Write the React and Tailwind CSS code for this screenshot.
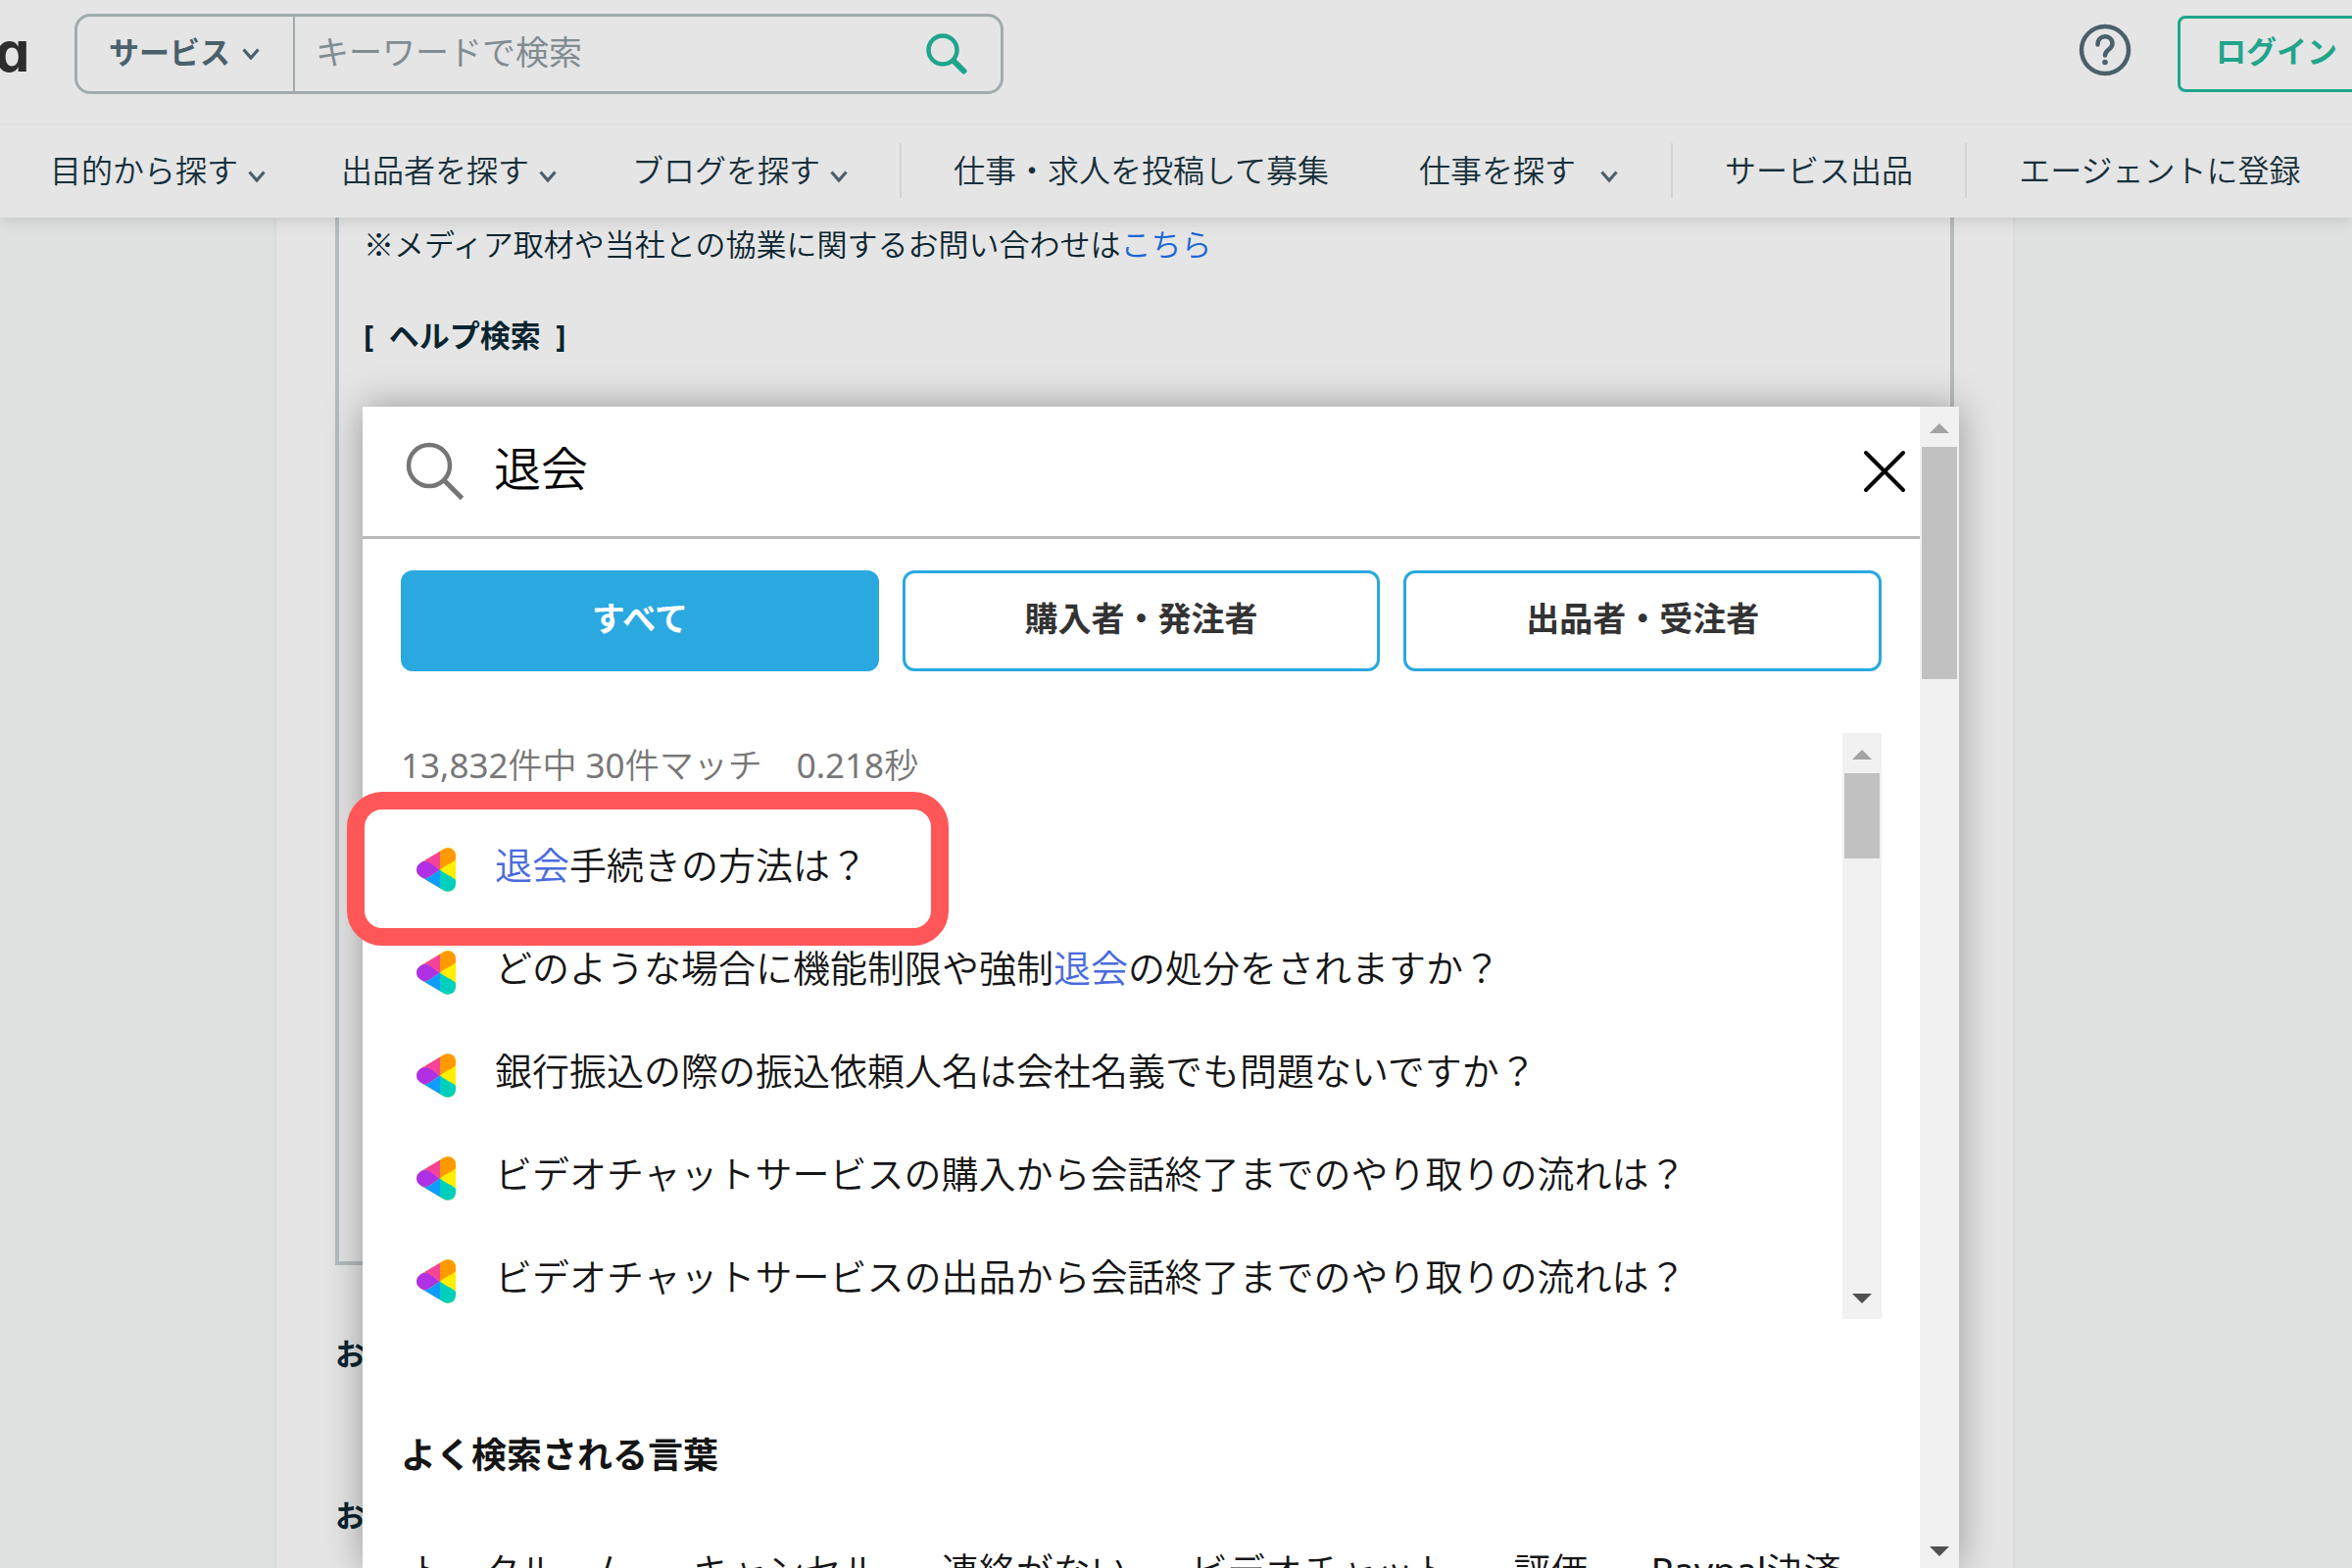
const ink = "text-[#16303b]";

function Chevron({ className = "" }) {
  return (
    <svg viewBox="0 0 20 14" fill="none" stroke="#4a606b" strokeWidth="3.2" className={`h-[14px] w-5 shrink-0 ${className}`} aria-hidden="true">
      <path d="M2.5 2.5 L10 11 L17.5 2.5" />
    </svg>
  );
}

function Mark() {
  return (
    <svg viewBox="0 0 40 45" className="h-[45px] w-10 shrink-0" aria-hidden="true">
      <defs>
        <clipPath id="mark-shape">
          <path d="M4 15.5 L28 1.3 C33.5 -1.8 40 2 40 8.4 V36.6 C40 43 33.5 46.8 28 43.7 L4 29.5 C-1.3 26.3 -1.3 18.7 4 15.5 Z" />
        </clipPath>
      </defs>
      <g clipPath="url(#mark-shape)">
        <rect width="40" height="45" fill="#ffee00" />
        <path d="M24 22.5 L0 8 V0 H24 Z" fill="#f5439a" />
        <path d="M24 22.5 V0 H40 V12 C36 16 29 18 24 22.5 Z" fill="#ff9900" />
        <path d="M24 22.5 C19 20 14 14 8 13.5 L0 10 V35 L8 31.5 C14 31 19 25 24 22.5 Z" fill="#b030e5" />
        <path d="M24 22.5 C19 25 14 31 8 31.5 L0 36 V45 H24 Z" fill="#0d9cff" />
        <path d="M24 22.5 V45 H40 V33 C36 29 29 27 24 22.5 Z" fill="#00cfbd" />
      </g>
    </svg>
  );
}

function ScrollBar({ thumb, className = "" }) {
  return (
    <div className={`flex w-10 shrink-0 flex-col items-center bg-[#f1f1f1] ${className}`} aria-hidden="true">
      <div className="flex h-[41px] shrink-0 items-center pt-0.5">
        <svg viewBox="0 0 20 10" className="h-[10px] w-5"><path d="M0 10 L10 0 L20 10 Z" fill="#a3a3a3" /></svg>
      </div>
      <div className={`w-9 bg-[#c1c1c1] ${thumb}`} />
      <div className="flex-1" />
      <svg viewBox="0 0 20 10" className="h-[10px] w-5 shrink-0"><path d="M0 0 L10 10 L20 0 Z" fill="#505050" /></svg>
    </div>
  );
}

function NavMenu({ label, wide = false }) {
  return (
    <button type="button" className={`flex items-center ${wide ? "gap-6" : "gap-[9px]"}`}>
      {label}
      <Chevron className="mt-3" />
    </button>
  );
}

function NavRule() {
  return <div className="h-14 w-[2px] shrink-0 bg-[#d2d4d4]" />;
}

function Header() {
  return (
    <header className="relative z-10 bg-[#e5e5e5] shadow-[0_2px_16px_rgba(0,0,0,0.14)]">
      <div className="flex h-[128px] items-start border-b-2 border-[#e0e0e0]">
        <a href="#" aria-label="coconala" className="flex w-[76px] shrink-0 justify-start pt-[14px]">
          <span className="-ml-[5px] font-['Inter'] text-[56px] leading-[78px] font-bold text-[#2d2d2d] [font-feature-settings:'cv11']">a</span>
        </a>
        <form className="mt-[14px] flex h-[82px] w-[948px] items-center rounded-2xl border-[3px] border-[#a1abae]">
          <div className="relative flex h-full w-[222px] shrink-0 items-center border-r-2 border-[#a1abae]">
            <select aria-label="検索対象" className="h-full w-full appearance-none bg-transparent pb-1 pl-8 text-[31px] font-bold text-[#4a606b]">
              <option>サービス</option>
            </select>
            <Chevron className="pointer-events-none absolute right-[33px]" />
          </div>
          <input type="text" aria-label="キーワード" placeholder="キーワードで検索" className="h-full min-w-0 flex-1 bg-transparent pb-1 pl-[21px] text-[34px] text-[#16303b] placeholder:text-[#808c91]" />
          <button type="submit" aria-label="検索" className="mr-[34px]">
            <svg viewBox="0 0 42 42" fill="none" stroke="#1fa58c" className="h-[42px] w-[42px]">
              <circle cx="17" cy="17" r="14.5" strokeWidth="4.5" />
              <path d="M28 28 L38.5 38.5" strokeWidth="6" strokeLinecap="round" />
            </svg>
          </button>
        </form>
        <div className="flex-1" />
        <a href="#" aria-label="ヘルプ" className="mt-6 mr-[47px]">
          <svg viewBox="0 0 54 54" fill="none" stroke="#4a606b" strokeWidth="4.5" className="h-[54px] w-[54px]">
            <circle cx="27" cy="27" r="24" />
            <path d="M19.5 21.5 C19.5 10.5 34.5 11 34.5 20.5 C34.5 26.5 27 26.5 27 32.5" strokeLinecap="round" />
            <circle cx="27" cy="39.5" r="2.8" fill="#4a606b" stroke="none" />
          </svg>
        </a>
        <a href="#" className="mt-4 -mr-10 flex h-[78px] w-[218px] shrink-0 items-center rounded-lg border-[3px] border-[#1fa58c] pb-1.5 pl-9 text-[31px] font-bold text-[#1fa58c]">ログイン</a>
      </div>
      <nav className={`flex h-[94px] items-center overflow-hidden pb-0.5 pl-[51px] text-[32px] leading-[48px] font-[350] whitespace-nowrap ${ink}`}>
        <div className="flex gap-[76px]">
          <NavMenu label="目的から探す" />
          <NavMenu label="出品者を探す" />
          <NavMenu label="ブログを探す" />
        </div>
        <div className="ml-[52px] flex items-center gap-[53px]">
          <NavRule />
          <div className="flex items-center gap-[92px]">
            <a href="#">仕事・求人を投稿して募集</a>
            <NavMenu label="仕事を探す" wide />
          </div>
          <NavRule />
          <a href="#">サービス出品</a>
          <NavRule />
          <a href="#">エージェントに登録</a>
          <NavRule />
        </div>
      </nav>
    </header>
  );
}

const hit = (text) => <span className="text-[#4a6bdc]">{text}</span>;
const latin = (text) => <span className="font-normal">{text}</span>;

const results = [
  <>{hit("退会")}手続きの方法は？</>,
  <>どのような場合に機能制限や強制{hit("退会")}の処分をされますか？</>,
  <>銀行振込の際の振込依頼人名は会社名義でも問題ないですか？</>,
  <>ビデオチャットサービスの購入から会話終了までのやり取りの流れは？</>,
  <>ビデオチャットサービスの出品から会話終了までのやり取りの流れは？</>,
];

const words = ["トークルーム", "キャンセル", "連絡がない", "ビデオチャット", "評価", <>{latin("Paypal")}決済</>];

function SearchDialog() {
  return (
    <section role="dialog" aria-label="ヘルプ検索" className="absolute top-[415px] right-[401px] bottom-0 left-[370px] z-20 flex bg-white shadow-[0_0_36px_rgba(0,0,0,0.34)]">
      <div className="flex min-w-0 flex-1 flex-col">
        <div className="flex h-[135px] shrink-0 items-center border-b-[3px] border-[#b9b9b9] pr-[14px] pl-11">
          <svg viewBox="0 0 60 60" fill="none" stroke="#757575" strokeWidth="4.5" className="h-[60px] w-[60px] shrink-0" aria-hidden="true">
            <circle cx="24" cy="24" r="21" />
            <path d="M39 39 L57.5 57.5" strokeWidth="5" />
          </svg>
          <input type="text" aria-label="ヘルプを検索" defaultValue="退会" className="ml-[30px] h-24 min-w-0 flex-1 bg-transparent pb-3 text-[48px] font-[350] text-black" />
          <button type="button" aria-label="閉じる">
            <svg viewBox="0 0 44 44" fill="none" stroke="#000" strokeWidth="4" strokeLinecap="round" className="h-11 w-11">
              <path d="M3 3 L41 41 M41 3 L3 41" />
            </svg>
          </button>
        </div>
        <div className="flex flex-1 flex-col px-[39px] pt-8">
          <div className="grid grid-cols-3 gap-6 text-[34px] font-bold text-[#333]">
            <button type="button" className="h-[103px] rounded-xl border-[3px] border-[#2aa8e0] bg-[#2aa8e0] pb-1 text-white">すべて</button>
            <button type="button" className="h-[103px] rounded-xl border-[3px] border-[#2aa8e0] pb-1">購入者・発注者</button>
            <button type="button" className="h-[103px] rounded-xl border-[3px] border-[#2aa8e0] pb-1">出品者・受注者</button>
          </div>
          <div className="mt-[63px] flex h-[598px] shrink-0">
            <div className="min-w-0 flex-1 overflow-hidden">
              <p className="h-[83px] pt-2 text-[35px] leading-[50px] font-[350] text-[#777] whitespace-pre">{latin("13,832")}件中 {latin("30")}件マッチ　{latin("0.218")}秒</p>
              <ul className="text-[38px] leading-[56px] font-[350] text-[#151515]">
                {results.map((text, i) => (
                  <li key={i} className="h-[105px]">
                    <a href="#" className="flex h-full items-center gap-10 pl-4">
                      <span className="pt-2"><Mark /></span>
                      <span className="pb-1">{text}</span>
                    </a>
                  </li>
                ))}
              </ul>
            </div>
            <ScrollBar thumb="h-[87px]" className="pb-4" />
          </div>
          <h2 className="mt-[112px] text-[36px] leading-[54px] font-bold text-[#151515]">よく検索される言葉</h2>
          <div className="mt-[62px] flex h-[34px] gap-16 overflow-hidden pl-2 text-[38px] leading-[56px] font-[350] whitespace-nowrap text-[#151515]">
            {words.map((word, i) => (
              <a href="#" key={i}>{word}</a>
            ))}
          </div>
        </div>
      </div>
      <ScrollBar thumb="h-[237px]" className="pb-3" />
      <div className="pointer-events-none absolute top-[393px] -left-4 h-[157px] w-[614px] rounded-[36px] border-[18px] border-[#ff5757]" />
    </section>
  );
}

export default function App() {
  return (
    <div className="relative flex h-screen flex-col overflow-hidden bg-[#dfe2e1] font-['Noto_Sans','Noto_Sans_CJK_JP',sans-serif]" lang="ja">
      <Header />
      <main className="mr-[344px] ml-[280px] flex-1 border-x-2 border-[#d9dcdc] bg-[#e5e5e5] px-[60px] text-[31px] leading-[46px] text-[#0a2530]">
        <div className="h-[1069px] border-x-4 border-b-4 border-[#b5bcbf] pt-[3px] pl-[25px]">
          <p className="font-[350]"><span className="font-['Noto_Sans_CJK_JP']">※</span>メディア取材や当社との協業に関するお問い合わせは<a href="#" className="text-[#1a66d8]">こちら</a></p>
          <h2 className="mt-[47px] font-bold">[&ensp;ヘルプ検索&ensp;]</h2>
        </div>
        <p className="mt-[67px] font-bold">お</p>
        <p className="mt-[119px] font-bold">お</p>
      </main>
      <SearchDialog />
    </div>
  );
}
